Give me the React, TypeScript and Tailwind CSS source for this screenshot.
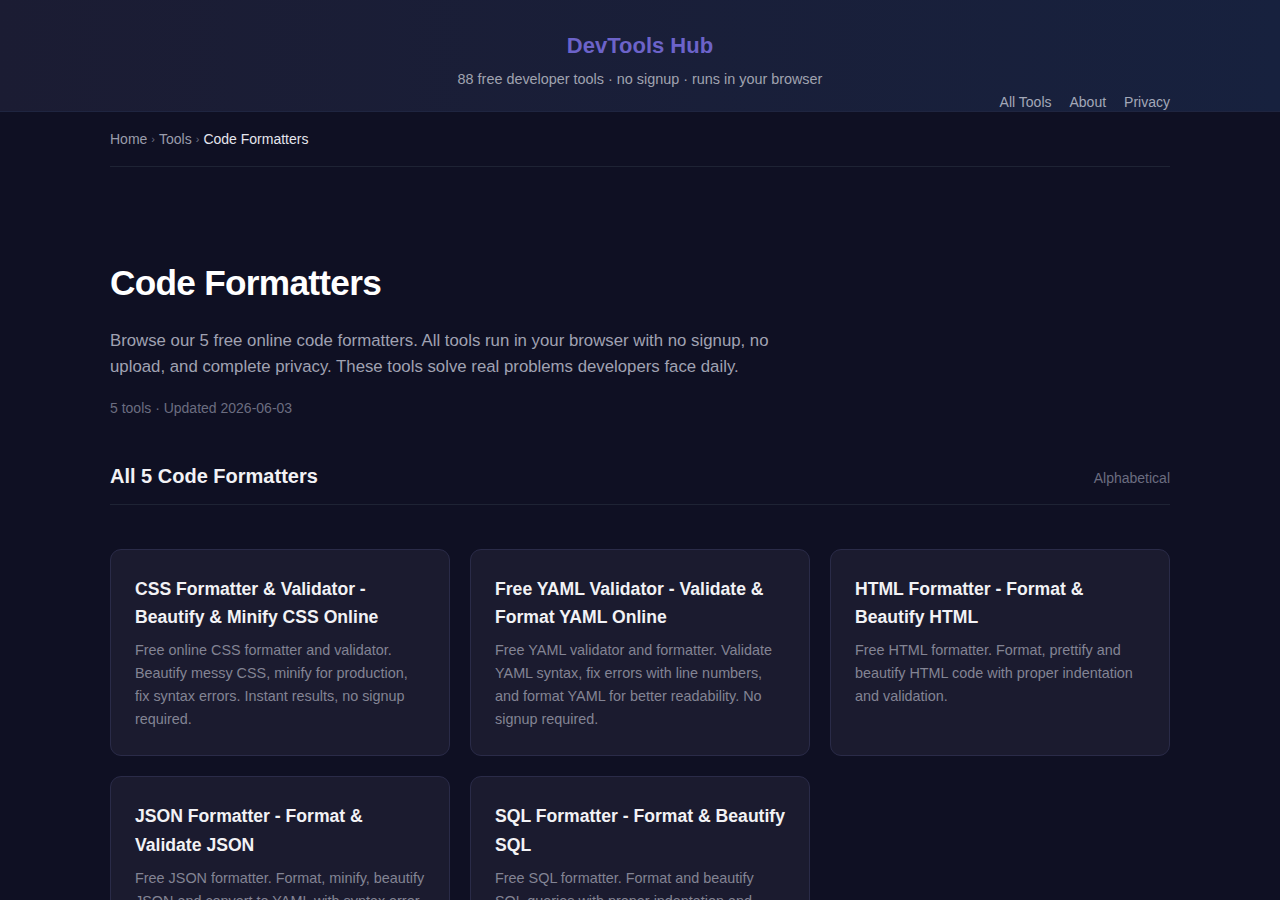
import React from "react";

const tools = [
  {
    title: "CSS Formatter & Validator - Beautify & Minify CSS Online",
    desc: "Free online CSS formatter and validator. Beautify messy CSS, minify for production, fix syntax errors. Instant results, no signup required.",
  },
  {
    title: "Free YAML Validator - Validate & Format YAML Online",
    desc: "Free YAML validator and formatter. Validate YAML syntax, fix errors with line numbers, and format YAML for better readability. No signup required.",
  },
  {
    title: "HTML Formatter - Format & Beautify HTML",
    desc: "Free HTML formatter. Format, prettify and beautify HTML code with proper indentation and validation.",
  },
  {
    title: "JSON Formatter - Format & Validate JSON",
    desc: "Free JSON formatter. Format, minify, beautify JSON and convert to YAML with syntax error highlighting. No signup required.",
  },
  {
    title: "SQL Formatter - Format & Beautify SQL",
    desc: "Free SQL formatter. Format and beautify SQL queries with proper indentation and syntax highlighting.",
  },
];

export default function App() {
  return (
    <div
      className="min-h-[900px] bg-[#0f1023] text-[#e0e0e0]"
      style={{ fontFamily: '"Liberation Sans", Arial, sans-serif' }}
    >
      <header className="border-b border-[#1f2540] bg-gradient-to-r from-[#1b1c33] to-[#17213e]">
        <div className="mx-auto w-[1060px] pt-[31px]">
          <div className="text-center text-[22px] font-bold leading-[30px] text-[#6c63c9]">
            DevTools Hub
          </div>
          <div className="mt-[8px] text-center text-[14.4px] leading-[20px] text-[#a0a3b0]">
            88 free developer tools · no signup · runs in your browser
          </div>
          <nav className="mt-[4px] flex justify-end gap-[18px] text-[14px] leading-[18px] text-[#a3a8b8]">
            <span>All Tools</span>
            <span>About</span>
            <span>Privacy</span>
          </nav>
        </div>
      </header>

      <main className="mx-auto w-[1060px]">
        <div className="flex items-center gap-[4px] border-b border-[#1e2334] pt-[17px] pb-[17px] text-[14px] leading-[20px]">
          <span className="text-[#9a9cab]">Home</span>
          <span className="text-[11px] text-[#6b6d80]">›</span>
          <span className="text-[#9a9cab]">Tools</span>
          <span className="text-[11px] text-[#6b6d80]">›</span>
          <span className="text-[#e6e6ee]">Code Formatters</span>
        </div>

        <h1 className="mt-[94px] text-[35.2px] font-bold leading-[43px] tracking-[-0.02em] text-white">
          Code Formatters
        </h1>
        <p className="mt-[24px] max-w-[700px] text-[16.8px] leading-[26px] text-[#a0a2b2]">
          Browse our 5 free online code formatters. All tools run in your browser with no
          signup, no upload, and complete privacy. These tools solve real problems developers
          face daily.
        </p>
        <div className="mt-[18px] text-[14px] leading-[20px] text-[#6b6d80]">
          5 tools · Updated 2026-06-03
        </div>

        <div className="mt-[46px] flex items-end justify-between border-b border-[#1e2334] pb-[16px]">
          <h2 className="text-[20px] font-bold leading-[24px] text-[#f2f2f5]">
            All 5 Code Formatters
          </h2>
          <span className="text-[14px] leading-[20px] text-[#6b6d80]">Alphabetical</span>
        </div>

        <div className="mt-[44px] grid grid-cols-3 gap-[20px]">
          {tools.map((t) => (
            <div
              key={t.title}
              className="rounded-[11px] border border-[#2a2b48] bg-[#1b1b2f] px-[24px] pt-[25px] pb-[24px]"
            >
              <div className="text-[17.6px] font-bold leading-[28.2px] text-[#f2f2f5]">
                {t.title}
              </div>
              <div className="mt-[8px] text-[14.4px] leading-[23px] text-[#838494]">
                {t.desc}
              </div>
            </div>
          ))}
        </div>
      </main>
    </div>
  );
}
